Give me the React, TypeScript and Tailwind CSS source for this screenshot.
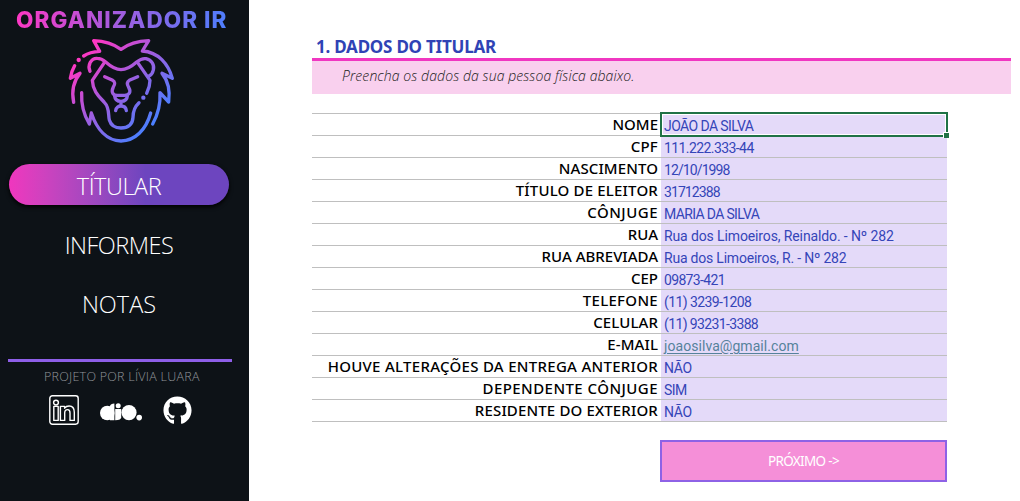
import { FaGithub } from "react-icons/fa";

type Row = { label: string; value: string; lt: string; vt: string; link?: boolean };

const rows: Row[] = [
  { label: "NOME", value: "JOÃO DA SILVA", lt: "tracking-[0px]", vt: "tracking-[-0.59px]" },
  { label: "CPF", value: "111.222.333-44", lt: "tracking-[0.2px]", vt: "tracking-[-0.58px]" },
  { label: "NASCIMENTO", value: "12/10/1998", lt: "tracking-[0.1px]", vt: "tracking-[-0.9px]" },
  { label: "TÍTULO DE ELEITOR", value: "31712388", lt: "tracking-[0.18px]", vt: "tracking-[-0.92px]" },
  { label: "CÔNJUGE", value: "MARIA DA SILVA", lt: "tracking-[0.5px]", vt: "tracking-[-0.65px]" },
  { label: "RUA", value: "Rua dos Limoeiros, Reinaldo. - Nº 282", lt: "tracking-[0px]", vt: "tracking-[-0.12px]" },
  { label: "RUA ABREVIADA", value: "Rua dos Limoeiros, R. - Nº 282", lt: "tracking-[0px]", vt: "tracking-[-0.21px]" },
  { label: "CEP", value: "09873-421", lt: "tracking-[0px]", vt: "tracking-[-0.66px]" },
  { label: "TELEFONE", value: "(11) 3239-1208", lt: "tracking-[0.3px]", vt: "tracking-[-0.6px]" },
  { label: "CELULAR", value: "(11) 93231-3388", lt: "tracking-[0.1px]", vt: "tracking-[-0.63px]" },
  { label: "E-MAIL", value: "joaosilva@gmail.com", lt: "tracking-[0.1px]", vt: "tracking-[0.06px]", link: true },
  { label: "HOUVE ALTERAÇÕES DA ENTREGA ANTERIOR", value: "NÃO", lt: "tracking-[0.29px]", vt: "tracking-[-0.3px]" },
  { label: "DEPENDENTE CÔNJUGE", value: "SIM", lt: "tracking-[0.45px]", vt: "tracking-[-0.6px]" },
  { label: "RESIDENTE DO EXTERIOR", value: "NÃO", lt: "tracking-[0.15px]", vt: "tracking-[-0.3px]" },
];

function Lion() {
  return (
    <svg viewBox="0 0 360 342" className="h-[114px] w-[120px]" fill="none" stroke="url(#mane)" strokeWidth="10" strokeLinecap="round" strokeLinejoin="round">
      <defs>
        <linearGradient id="mane" gradientUnits="userSpaceOnUse" x1="70" y1="60" x2="280" y2="270">
          <stop offset="0" stopColor="#ff37c3" />
          <stop offset="0.5" stopColor="#9d5ee0" />
          <stop offset="1" stopColor="#4a80ff" />
        </linearGradient>
      </defs>
      <path d="M71 66Q90 53 119 52L101 20Q150 22 183 46Q216 22 266 20L247 51C295 54 325 90 337 133L306 118C328 145 330 175 326 204L300 176C302 215 292 245 278 270" />
      <path d="M44 95Q34 112 31 133L60 118C40 142 35 175 41 205" />
      <path d="M65 176C63 215 70 240 88 270L94 237C110 285 140 320 183 321C225 320 258 288 272 237" />
      <path d="M90 112C82 95 92 72 112 73C122 73 129 77 137 84C155 100 168 107 183 107C198 107 212 100 230 84C240 76 247 72 258 74C275 78 284 93 280 108C278 118 272 124 266 127" />
      <path d="M133 86L97 139C99 175 120 190 133 205C150 222 144 245 148 258C153 275 168 282 183 282C205 282 218 270 219 250C219 232 224 218 237 206" />
      <path d="M233 86L270 139C270 155 266 166 260 178" />
      <path d="M134 128L158 139C168 145 164 152 160 159C152 176 160 184 172 184L194 184C208 184 214 174 206 160C200 150 200 144 208 139L233 128" />
      <path d="M164 186C165 197 172 202 183 202C194 202 201 197 202 186M183 202V216M167 230C168 220 176 216 183 216C191 216 198 220 199 230" />
      <path d="M56 78h.1M250 191h.1" strokeWidth="13" />
    </svg>
  );
}

function LinkedinOutline() {
  return (
    <svg viewBox="0 0 30 30" className="size-[30px]" fill="none" stroke="#fff" strokeWidth="1.4" strokeLinejoin="round">
      <rect x="0.8" y="0.8" width="28.4" height="28.4" rx="2.6" />
      <circle cx="7" cy="7.6" r="2.4" />
      <path d="M4.8 11.4h4.4v14H4.8zM11.4 11.4h4.2v1.8c1-1.4 2.5-2.2 4.5-2.2 3.8 0 5.2 2.6 5.2 6.3v8.1h-4.3v-7.4c0-2-.5-3.4-2.4-3.4-2 0-2.9 1.5-2.9 3.5v7.3h-4.3z" />
    </svg>
  );
}

function Dio() {
  return (
    <svg viewBox="0 0 42 18" className="h-[18px] w-[42px]" fill="#fff">
      <circle cx="7.3" cy="10" r="7.3" />
      <path d="M10 3Q10.5 .5 14.4 .5V17.3H10z" />
      <path d="M15.2 6h6v8.3q0 2.8-6 3z" />
      <circle cx="18.2" cy="2.8" r="2.5" />
      <circle cx="29" cy="9.6" r="7.6" />
      <circle cx="39.2" cy="14.6" r="2.8" />
    </svg>
  );
}

export default function App() {
  return (
    <div className="flex h-[501px] w-[1020px] overflow-hidden bg-white font-['Open_Sans',sans-serif]">
      <aside className="flex h-full w-[249px] shrink-0 flex-col bg-[#0d1217]">
        <h1 className="mt-[6px] ml-[16px] h-[28px] w-[214px] bg-linear-[100deg] from-[#ff37c3] via-[#9d5ee0] to-[#4a80ff] bg-clip-text font-['Inter',sans-serif] text-[22.5px] leading-[28px] font-extrabold tracking-[1.05px] whitespace-nowrap text-transparent">
          ORGANIZADOR IR
        </h1>
        <div className="ml-[60px] h-[114px]">
          <Lion />
        </div>
        <nav className="mt-[16px] ml-[9px] flex w-[220px] flex-col gap-[18px] text-center text-[23.5px] leading-[41px] font-light text-white">
          <a className="h-[41px] rounded-full bg-linear-to-r from-[#f036be] to-[#6d45bf] to-62% pt-[2px] shadow-[0_2px_4px_#000]">
            <span className="tracking-[-0.45px]">TÍTULAR</span>
          </a>
          <a className="h-[41px] pt-[2px]"><span className="tracking-[-0.5px]">INFORMES</span></a>
          <a className="h-[41px] pt-[2px]"><span className="tracking-[0px]">NOTAS</span></a>
        </nav>
        <div className="mt-[36px] ml-[8px] h-[3px] w-[224px] bg-[#8e5fe8]" />
        <p className="mt-[6px] ml-[44px] text-[12.5px] leading-[18px] font-light tracking-[0.26px] whitespace-nowrap text-[#92959a]">
          PROJETO POR LÍVIA LUARA
        </p>
        <div className="mt-[9px] ml-[49px] flex h-[30px] items-center">
          <LinkedinOutline />
          <div className="mt-[3px] ml-[21px]"><Dio /></div>
          <FaGithub className="ml-[21px] size-[29px] text-white" />
        </div>
      </aside>

      <main className="flex flex-1 flex-col pl-[63px]">
        <h2 className="mt-[34px] h-[24px] pl-[4px] font-['Noto_Sans',sans-serif] text-[17px] leading-[25px] font-bold whitespace-nowrap text-[#2f43b5]">
          <span className="tracking-[-0.23px]">1. DADOS DO TITULAR</span>
        </h2>
        <div className="h-[36px] w-[699px] border-t-[3px] border-[#f037c1] bg-[#f9d0ee] pl-[30px] text-[14px] leading-[30px] font-light tracking-[0.09px] whitespace-nowrap text-[#222] italic">
          Preencha os dados da sua pessoa física abaixo.
        </div>

        <div className="relative mt-[19px] w-[635px] border-t border-[#bfbfbf]">
          {rows.map((r) => (
            <div key={r.label} className="flex h-[22px] border-b border-[#bfbfbf] whitespace-nowrap">
              <div className="flex w-[349px] justify-end pr-[3px] font-['Noto_Sans',sans-serif] text-[15px] leading-[20px] font-medium text-black">
                <span className={r.lt}>{r.label}</span>
              </div>
              <div className="w-[286px] bg-[#e4daf9] pl-[3px] font-['Roboto',sans-serif] text-[14px] leading-[25px] text-[#3545b8]">
                <span className={r.link ? `${r.vt} text-[#56829b] underline underline-offset-2` : r.vt}>{r.value}</span>
              </div>
            </div>
          ))}
          <div className="absolute -top-[2px] left-[348px] h-[25px] w-[288px] border-2 border-[#1f7246]">
            <div className="h-full w-full border border-white" />
            <div className="absolute -right-[3px] -bottom-[3px] size-[6px] border-t border-l border-white bg-[#1f7246]" />
          </div>
        </div>

        <button className="mt-[18px] ml-[348px] h-[42px] w-[287px] border-2 border-[#8e62e6] bg-[#f58fd8] font-['Noto_Sans',sans-serif] text-[13.5px] text-white">
          <span className="tracking-[-0.65px]">PRÓXIMO -&gt;</span>
        </button>
      </main>
    </div>
  );
}
